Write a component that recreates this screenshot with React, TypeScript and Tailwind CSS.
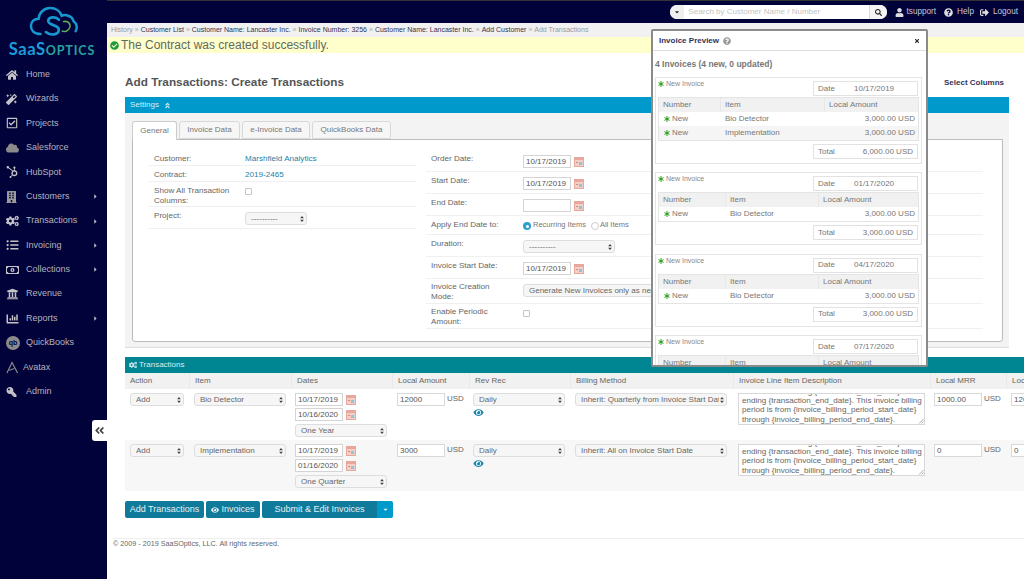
import React from 'react';
import {
  FaAngleDoubleLeft,
  FaAngleDoubleUp,
  FaAsterisk,
  FaBuilding,
  FaCaretDown,
  FaCaretRight,
  FaChartBar,
  FaCheckCircle,
  FaCloud,
  FaCogs,
  FaEye,
  FaHome,
  FaHubspot,
  FaKey,
  FaListUl,
  FaMagic,
  FaQuestionCircle,
  FaRegCheckSquare,
  FaRegMoneyBillAlt,
  FaSearch,
  FaSignOutAlt,
  FaTimes,
  FaUniversity,
  FaUser,
} from 'react-icons/fa';

const font = { fontFamily: '"Liberation Sans", Arial, sans-serif' };

const QuickBooksIcon = () => (
  <span className="flex h-[14px] w-[14px] items-center justify-center rounded-full bg-[#8b8b8b] text-[7px] font-bold text-[#02023a]">qb</span>
);

const AvataxIcon = () => (
  <svg viewBox="0 0 14 14" className="h-[13px] w-[13px]" fill="none" stroke="#8f8f8f" strokeWidth="1.2">
    <path d="M1 13 L6.5 1.5 L12.5 13" />
    <path d="M3.5 10 L9 8" />
  </svg>
);

const navItems: { label: string; icon: React.ReactNode; caret?: boolean; iconWidth?: string }[] = [
  { label: 'Home', icon: <FaHome className="h-[12px] w-[12px]" /> },
  { label: 'Wizards', icon: <FaMagic className="h-[11px] w-[11px]" /> },
  { label: 'Projects', icon: <FaRegCheckSquare className="h-[12px] w-[12px]" /> },
  { label: 'Salesforce', icon: <FaCloud className="h-[12px] w-[13px] text-[#8a8a8a]" /> },
  { label: 'HubSpot', icon: <FaHubspot className="h-[12px] w-[12px]" /> },
  { label: 'Customers', icon: <FaBuilding className="h-[12px] w-[11px] text-[#9a9a9a]" />, caret: true },
  { label: 'Transactions', icon: <FaCogs className="h-[12px] w-[13px]" />, caret: true },
  { label: 'Invoicing', icon: <FaListUl className="h-[12px] w-[13px]" />, caret: true },
  { label: 'Collections', icon: <FaRegMoneyBillAlt className="h-[12px] w-[13px]" />, caret: true },
  { label: 'Revenue', icon: <FaUniversity className="h-[12px] w-[13px]" /> },
  { label: 'Reports', icon: <FaChartBar className="h-[12px] w-[13px]" />, caret: true },
  { label: 'QuickBooks', icon: <QuickBooksIcon /> },
  { label: 'Avatax', icon: <AvataxIcon />, iconWidth: 'w-[17px]' },
  { label: 'Admin', icon: <FaKey className="h-[10px] w-[11px] -scale-x-100" /> },
];

const Logo = () => (
  <div className="flex flex-col items-center pt-[6px]">
    <svg viewBox="0 0 52 34" className="h-[33px] w-[50px]" fill="none">
      <path
        d="M12 29 C5 29 2 25 2 20.5 C2 16 5.5 13 10 13 C10.5 6.5 16 2 22 2 C28 2 32.5 5.5 34 10 C37 8.5 45 9.5 46.5 16 C50 18 50.5 23 48.5 26"
        stroke="#1597cf"
        strokeWidth="2.6"
        strokeLinecap="round"
      />
      <path
        d="M31 14 C28 10.5 20 11 20 15.5 C20 20.5 31 19 31 24.5 C31 30 22 31 17.5 27"
        stroke="#1597cf"
        strokeWidth="2.8"
        strokeLinecap="round"
      />
      <path d="M36 16 C41 15 44 19 42 23 C40.5 26 37 27 34.5 26" stroke="#5fae5c" strokeWidth="1.6" strokeLinecap="round" />
    </svg>
    <div className="mt-[3px] flex items-baseline whitespace-nowrap pr-[3px] leading-[14px]" style={{ fontFamily: 'Lato, sans-serif' }}>
      <span className="text-[16.5px] font-bold tracking-[0.6px] text-[#1a9cd8]">SaaS</span>
      <span className="text-[12.5px] font-bold tracking-[0.9px] text-[#27a39b]">OPTICS</span>
    </div>
  </div>
);

const Sidebar = () => (
  <aside className="relative h-full w-[107px] shrink-0 bg-[#02023a]">
    <Logo />
    <nav className="mt-[4.5px]">
      {navItems.map((item) => (
        <div key={item.label} className="flex h-[24.4px] items-center pl-[6px] pr-[9px] text-[9px] text-[#b4b4bc]">
          <span className={`flex shrink-0 text-[#c4c4c8] ${item.iconWidth ?? 'w-[20px]'}`}>{item.icon}</span>
          <span className="flex-1">{item.label}</span>
          {item.caret && <FaCaretRight className="h-[7px] w-[5px] text-[#b4b4bc]" />}
        </div>
      ))}
    </nav>
    <div className="absolute left-[92px] top-[420px] flex h-[21px] w-[15px] items-center justify-center rounded-l-[3px] bg-white">
      <FaAngleDoubleLeft className="h-[11px] w-[11px] text-[#444]" />
    </div>
  </aside>
);

const TopBar = () => (
  <div className="flex h-[23px] items-center justify-end border-t border-[#333] bg-[#02023a] pr-[6px] text-[8.2px] text-[#c8c8d0]">
    <div className="flex h-[14px] w-[217px] items-stretch overflow-hidden rounded-full bg-white">
      <span className="flex w-[14px] items-center justify-center bg-[#efefef]">
        <FaCaretDown className="h-[6px] w-[6px] text-[#222]" />
      </span>
      <span className="flex-1 pl-[5px] text-[8px] leading-[14px] text-[#c4c4c4]">Search by Customer Name / Number</span>
      <span className="flex w-[18px] items-center justify-center border-l border-[#ddd] bg-[#f4f4f4]">
        <FaSearch className="h-[7px] w-[7px] text-[#222]" />
      </span>
    </div>
    <FaUser className="ml-[8px] h-[9px] w-[9px] text-[#ddd]" />
    <span className="ml-[3px]">tsupport</span>
    <FaQuestionCircle className="ml-[8px] h-[9px] w-[9px] text-[#ddd]" />
    <span className="ml-[4px]">Help</span>
    <FaSignOutAlt className="ml-[6px] h-[9px] w-[9px] text-[#ddd]" />
    <span className="ml-[4px]">Logout</span>
  </div>
);

const Breadcrumb = () => (
  <div className="flex h-[14px] items-center gap-[2px] whitespace-nowrap bg-[#f1f1f1] pl-[4px] text-[7px] text-[#33334f]">
    <span className="text-[#9a9a9a]">History</span>
    <span className="text-[#aaa]">»</span>
    <span>Customer List</span>
    <span className="text-[#aaa]">»</span>
    <span>Customer Name: Lancaster Inc.</span>
    <span className="text-[#aaa]">»</span>
    <span>Invoice Number: 3256</span>
    <span className="text-[#aaa]">»</span>
    <span>Customer Name: Lancaster Inc.</span>
    <span className="text-[#aaa]">»</span>
    <span>Add Customer</span>
    <span className="text-[#aaa]">»</span>
    <span className="text-[#9a9a9a]">Add Transactions</span>
  </div>
);

const Alert = () => (
  <div className="flex h-[16px] items-center bg-[#ffffcc] pl-[3px] text-[12px] text-[#5f6a5f]">
    <FaCheckCircle className="mr-[2px] h-[9px] w-[9px] text-[#1f9a3c]" />
    The Contract was created successfully.
  </div>
);

const Calendar = () => (
  <svg viewBox="0 0 10 10" className="h-[10px] w-[10px] shrink-0">
    <rect width="10" height="10" fill="#e8a79c" />
    <rect x="1" y="3" width="8" height="6" fill="#f3cfc6" />
    <rect x="5" y="5" width="3" height="3" fill="#8fc3dc" />
    <rect x="2" y="5" width="2" height="1" fill="#d9887a" />
  </svg>
);

const DateField = ({ value = '' }: { value?: string }) => (
  <div className="flex items-center gap-[3px]">
    <span className="h-[13px] w-[48px] border border-[#d4d4d4] bg-white pl-[2px] text-[8px] leading-[12px] text-[#555]">{value}</span>
    <Calendar />
  </div>
);

const Select = ({ value, className }: { value: string; className: string }) => (
  <div className={`flex h-[13px] items-center justify-between overflow-hidden whitespace-nowrap rounded-[3px] border border-[#ddd] bg-[#f6f6f6] pl-[5px] pr-[2px] text-[8px] text-[#666] ${className}`}>
    <span className="overflow-hidden">{value}</span>
    <svg viewBox="0 0 5 8" className="ml-[1px] h-[6px] w-[4px] shrink-0" fill="#444">
      <path d="M2.5 0 L5 3 H0 Z M2.5 8 L0 5 H5 Z" />
    </svg>
  </div>
);

const Checkbox = () => <span className="block h-[7px] w-[7px] rounded-[1px] border border-[#c4c4c4] bg-white" />;

const FormRow = ({
  label,
  height,
  labelWidth,
  top = 'pt-[4px]',
  children,
}: {
  label: React.ReactNode;
  height: string;
  labelWidth: string;
  top?: string;
  children?: React.ReactNode;
}) => (
  <div className={`flex border-b border-[#f0f0f0] pl-[5px] text-[8.1px] leading-[9.5px] text-[#666] ${height} ${top}`}>
    <div className={`shrink-0 ${labelWidth}`}>{label}</div>
    <div className="flex-1">{children}</div>
  </div>
);

const Settings = () => (
  <section className="w-[884px]">
    <div className="flex h-[16px] items-center gap-[5px] bg-[#0099cc] pl-[5px] text-[8px] text-[#d6eef6]">
      Settings
      <FaAngleDoubleUp className="h-[7px] w-[7px]" />
    </div>
    <div className="h-[235px] border-b border-[#ddd] bg-[#f3f3f3] px-[7px] pt-[8px]">
      <div className="relative z-10 flex gap-[2px] text-[8px] text-[#777]">
        <span className="-mb-px flex h-[19px] w-[45px] items-center justify-center rounded-t-[3px] border border-b-0 border-[#ccc] bg-white">General</span>
        <span className="flex h-[18px] w-[61px] items-center justify-center rounded-t-[3px] border border-[#d8d8d8] bg-[#f6f6f6]">Invoice Data</span>
        <span className="flex h-[18px] w-[68px] items-center justify-center rounded-t-[3px] border border-[#d8d8d8] bg-[#f6f6f6]">e-Invoice Data</span>
        <span className="flex h-[18px] w-[79px] items-center justify-center rounded-t-[3px] border border-[#d8d8d8] bg-[#f6f6f6]">QuickBooks Data</span>
      </div>
      <div className="flex h-[203px] w-[871px] gap-[10px] rounded-b-[3px] border border-[#bbb] bg-white pl-[16px] pr-[19px] pt-[10px]">
        <div className="w-[267px] shrink-0">
          <FormRow label="Customer:" height="h-[16px]" labelWidth="w-[91px]">
            <span className="text-[#1f7fa6]">Marshfield Analytics</span>
          </FormRow>
          <FormRow label="Contract:" height="h-[16px]" labelWidth="w-[91px]">
            <span className="text-[#1f7fa6]">2019-2465</span>
          </FormRow>
          <FormRow label={<>Show All Transaction<br />Columns:</>} height="h-[25px]" labelWidth="w-[91px]">
            <div className="pt-[2px]"><Checkbox /></div>
          </FormRow>
          <FormRow label="Project:" height="h-[22px]" labelWidth="w-[91px]">
            <div className="pt-[1px]"><Select value="----------" className="w-[62px]" /></div>
          </FormRow>
        </div>
        <div className="flex-1">
          <FormRow label="Order Date:" height="h-[22px]" labelWidth="w-[92px]"><div className="pt-[1px]"><DateField value="10/17/2019" /></div></FormRow>
          <FormRow label="Start Date:" height="h-[22px]" labelWidth="w-[92px]"><div className="pt-[1px]"><DateField value="10/17/2019" /></div></FormRow>
          <FormRow label="End Date:" height="h-[22px]" labelWidth="w-[92px]"><div className="pt-[1px]"><DateField /></div></FormRow>
          <FormRow label="Apply End Date to:" height="h-[19px]" labelWidth="w-[92px]">
            <div className="flex items-center text-[7.5px] text-[#777]">
              <span className="mr-[2px] mt-[2px] flex h-[8px] w-[8px] items-center justify-center rounded-full bg-[#2f9fd0]">
                <span className="h-[3px] w-[3px] rounded-full bg-white" />
              </span>
              Recurring Items
              <span className="ml-[5px] mr-[1px] mt-[2px] h-[8px] w-[8px] rounded-full border border-[#ccc] bg-white" />
              All Items
            </div>
          </FormRow>
          <FormRow label="Duration:" height="h-[22px]" labelWidth="w-[92px]"><div className="pt-[1px]"><Select value="----------" className="w-[92px]" /></div></FormRow>
          <FormRow label="Invoice Start Date:" height="h-[22px]" labelWidth="w-[92px]"><div className="pt-[1px]"><DateField value="10/17/2019" /></div></FormRow>
          <FormRow label={<>Invoice Creation<br />Mode:</>} height="h-[25px]" labelWidth="w-[92px]" top="pt-[3px]">
            <div className="pt-[2px]"><Select value="Generate New Invoices only as needed" className="w-[200px]" /></div>
          </FormRow>
          <FormRow label={<>Enable Periodic<br />Amount:</>} height="h-[25px]" labelWidth="w-[92px]" top="pt-[3px]">
            <div className="pt-[3px]"><Checkbox /></div>
          </FormRow>
        </div>
      </div>
    </div>
  </section>
);

const Description = () => (
  <div className="relative flex h-[32px] w-[187px] flex-col justify-end overflow-hidden border border-[#d8d8d8] bg-white pl-[3px] text-[8.1px] leading-[9.3px] text-[#666]">
    <div className="whitespace-nowrap">for the term starting {'{transaction_start_date}'} and</div>
    <div className="whitespace-nowrap">ending {'{transaction_end_date}'}. This invoice billing</div>
    <div className="whitespace-nowrap">period is from {'{invoice_billing_period_start_date}'}</div>
    <div className="whitespace-nowrap">through {'{invoice_billing_period_end_date}'}.</div>
    <svg viewBox="0 0 6 6" className="absolute bottom-0 right-0 h-[6px] w-[6px]" stroke="#888" strokeWidth="0.7">
      <path d="M1 5.5 L5.5 1 M3.5 5.5 L5.5 3.5" />
    </svg>
  </div>
);

const columns = 'grid grid-cols-[65px_102px_101px_77px_101px_163px_197px_76px_100px]';

const headers = ['Action', 'Item', 'Dates', 'Local Amount', 'Rev Rec', 'Billing Method', 'Invoice Line Item Description', 'Local MRR', 'Local Amount'];

const rows = [
  { item: 'Bio Detector', start: '10/17/2019', end: '10/16/2020', term: 'One Year', amount: '12000', billing: 'Inherit: Quarterly from Invoice Start Date', mrr: '1000.00', last: '12000', bg: 'bg-white' },
  { item: 'Implementation', start: '10/17/2019', end: '01/16/2020', term: 'One Quarter', amount: '3000', billing: 'Inherit: All on Invoice Start Date', mrr: '0', last: '0', bg: 'bg-[#f7f7f7]' },
];

const TextInput = ({ value }: { value: string }) => (
  <span className="block h-[13px] w-[48px] border border-[#d8d8d8] bg-white pl-[2px] text-[8px] leading-[12px] text-[#555]">{value}</span>
);

const Transactions = () => (
  <section className="mt-[9px] w-[982px]">
    <div className="flex h-[16px] items-center gap-[2px] bg-[#008592] pl-[4px] text-[8px] text-[#d8eef0]">
      <FaCogs className="h-[8px] w-[8px]" />
      Transactions
    </div>
    <div className={`${columns} h-[16px] bg-[#f1f1f1] text-[8px] leading-[16px] text-[#666]`}>
      {headers.map((header) => (
        <div key={header} className="overflow-hidden whitespace-nowrap border-r border-[#e9e9e9] pl-[5px]">{header}</div>
      ))}
    </div>
    {rows.map((row) => (
      <div key={row.item} className={`${columns} h-[51px] text-[8px] text-[#666] ${row.bg}`}>
        <div className="pl-[5px] pt-[4px]"><Select value="Add" className="w-[54px]" /></div>
        <div className="pl-[4px] pt-[4px]"><Select value={row.item} className="w-[92px]" /></div>
        <div className="flex flex-col gap-[2px] pl-[3px] pt-[4px]">
          <DateField value={row.start} />
          <DateField value={row.end} />
          <Select value={row.term} className="mt-[1px] w-[92px]" />
        </div>
        <div className="flex gap-[2px] pl-[4px] pt-[4px]">
          <TextInput value={row.amount} />
          <span className="leading-[11px]">USD</span>
        </div>
        <div className="pl-[3px] pt-[4px]">
          <Select value="Daily" className="w-[92px]" />
          <FaEye className="mt-[2px] h-[9px] w-[11px] text-[#1a87ab]" />
        </div>
        <div className="pl-[4px] pt-[4px]"><Select value={row.billing} className="w-[152px]" /></div>
        <div className="pl-[4px] pt-[4px]"><Description /></div>
        <div className="flex gap-[2px] pl-[3px] pt-[4px]">
          <TextInput value={row.mrr} />
          <span className="leading-[11px]">USD</span>
        </div>
        <div className="pl-[4px] pt-[4px]"><TextInput value={row.last} /></div>
      </div>
    ))}
  </section>
);

const Actions = () => (
  <div className="mt-[9px] flex h-[18px] gap-[2px] pt-px text-[9px] text-[#e4f1f5]">
    <span className="flex w-[79px] items-center justify-center rounded-[2px] bg-[#0f7a99]">Add Transactions</span>
    <span className="flex w-[54px] items-center justify-center gap-[2px] rounded-[2px] bg-[#0f7a99]">
      <FaEye className="h-[8px] w-[8px]" />
      Invoices
    </span>
    <div className="flex overflow-hidden rounded-[2px]">
      <span className="flex w-[115px] items-center justify-center bg-[#0f7a99]">Submit &amp; Edit Invoices</span>
      <span className="flex w-[16px] items-center justify-center bg-[#0099cc]">
        <FaCaretDown className="h-[7px] w-[7px]" />
      </span>
    </div>
  </div>
);

const invoices = [
  {
    date: '10/17/2019',
    total: '6,000.00 USD',
    cols: 'grid-cols-[62px_104px_1fr]',
    items: ['Bio Detector', 'Implementation'],
  },
  { date: '01/17/2020', total: '3,000.00 USD', cols: 'grid-cols-[67px_93px_1fr]', items: ['Bio Detector'] },
  { date: '04/17/2020', total: '3,000.00 USD', cols: 'grid-cols-[67px_93px_1fr]', items: ['Bio Detector'] },
  { date: '07/17/2020', total: '3,000.00 USD', cols: 'grid-cols-[67px_93px_1fr]', items: ['Bio Detector'] },
];

const InvoiceCard = ({ invoice }: { invoice: (typeof invoices)[number] }) => (
  <div className="mb-[8.4px] border border-[#e4e4e4] px-[2px] pb-[4px] pt-[3px] text-[8px] text-[#777]">
    <div className="flex items-start justify-between pr-[1px]">
      <div className="-mt-[2px] flex items-center gap-[2px] text-[7px] leading-[10px] text-[#888]">
        <FaAsterisk className="h-[6px] w-[6px] text-[#2a9a1a]" />
        New Invoice
      </div>
      <div className="flex h-[15px] w-[105px] items-center border border-[#e2e2e2] pl-[4px]">
        <span className="w-[36px]">Date</span>
        {invoice.date}
      </div>
    </div>
    <div className="mt-[1px] border border-[#e4e4e4]">
      <div className={`grid ${invoice.cols} h-[14px] bg-[#f1f1f1] leading-[14px]`}>
        <span className="border-r border-[#e8e8e8] pl-[4px]">Number</span>
        <span className="border-r border-[#e8e8e8] pl-[4px]">Item</span>
        <span className="pl-[4px]">Local Amount</span>
      </div>
      {invoice.items.map((item, i) => (
        <div key={item} className={`grid ${invoice.cols} h-[14px] leading-[14px] ${i % 2 ? 'bg-[#f5f5f5]' : 'bg-white'}`}>
          <span className="flex items-center gap-[2px] pl-[5px]">
            <FaAsterisk className="h-[6px] w-[6px] text-[#2a9a1a]" />
            New
          </span>
          <span className="pl-[4px]">{item}</span>
          <span className="pr-[3px] text-right">3,000.00 USD</span>
        </div>
      ))}
    </div>
    <div className="mt-[3px] flex justify-end pr-[1px]">
      <div className="flex h-[15px] w-[105px] items-center justify-between border border-[#e2e2e2] px-[4px]">
        <span>Total</span>
        {invoice.total}
      </div>
    </div>
  </div>
);

const InvoicePreview = () => (
  <div className="absolute left-[651px] top-[29px] h-[338px] w-[277px] overflow-hidden rounded-[2px] border-2 border-[#8a8a8a] bg-white">
    <div className="flex h-[20px] items-center border-b border-[#ddd] pl-[6px] pr-[6px] text-[8px] font-bold text-[#33335a]">
      Invoice Preview
      <FaQuestionCircle className="ml-[4px] h-[8px] w-[8px] text-[#999]" />
      <FaTimes className="ml-auto h-[6px] w-[6px] text-[#222]" />
    </div>
    <div className="pl-[2px] pr-[4px] pt-[8px]">
      <div className="mb-[7px] text-[8.5px] font-bold leading-[11px] text-[#777]">4 Invoices (4 new, 0 updated)</div>
      {invoices.map((invoice) => (
        <InvoiceCard key={invoice.date} invoice={invoice} />
      ))}
    </div>
  </div>
);

export default function App() {
  return (
    <div className="relative flex h-[579px] w-[1024px] overflow-hidden bg-white" style={font}>
      <Sidebar />
      <main className="min-w-0 flex-1">
        <TopBar />
        <Breadcrumb />
        <Alert />
        <div className="pl-[18px]">
          <div className="flex h-[44px] items-end justify-between pb-[7px] pr-[20px]">
            <h1 className="text-[11.8px] font-bold leading-[16px] text-[#555]">Add Transactions: Create Transactions</h1>
            <span className="mb-[1px] text-[8px] font-bold text-[#33335a]">Select Columns</span>
          </div>
          <Settings />
          <Transactions />
          <Actions />
        </div>
        <div className="ml-[6px] mt-[20px] border-t border-[#eee] text-[7.2px] leading-[10px] text-[#666]">
          © 2009 - 2019 SaaSOptics, LLC. All rights reserved.
        </div>
      </main>
      <InvoicePreview />
    </div>
  );
}
